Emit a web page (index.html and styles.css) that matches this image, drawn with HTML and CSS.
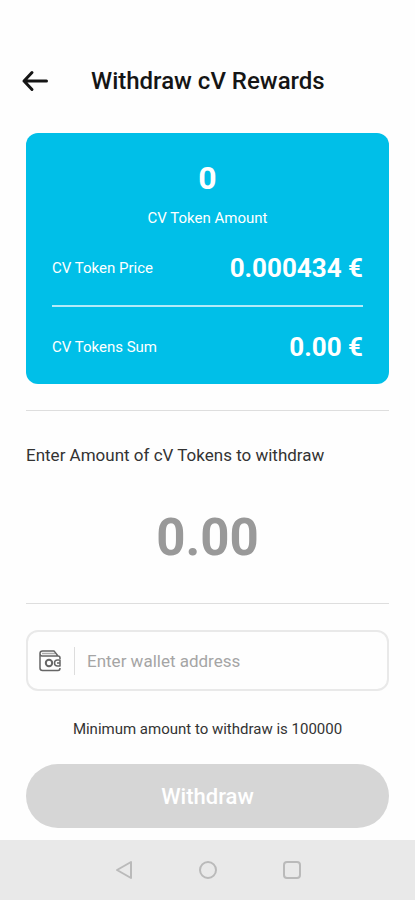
FILE: index.html
```html
<!DOCTYPE html>
<html lang="en">
<head>
<meta charset="utf-8">
<meta name="viewport" content="width=device-width, initial-scale=1">
<title>Withdraw cV Rewards</title>
<link rel="stylesheet" href="styles.css">
</head>
<body>
<header class="header">
  <button class="icon-button" type="button" aria-label="Back">
    <svg width="28" height="24" viewBox="0 0 28 24" fill="none" stroke="#151515" stroke-width="3" stroke-linecap="round" stroke-linejoin="round"><path d="M25.500 11H3M11 2.500L3 11l8 8.500"/></svg>
  </button>
  <h1 class="title">Withdraw cV Rewards</h1>
</header>
<main class="content">
  <section class="card">
    <p class="value value-large">0</p>
    <p class="caption">CV Token Amount</p>
    <div class="row"><span>CV Token Price</span><strong class="value">0.000434 €</strong></div>
    <div class="row row-sum"><span>CV Tokens Sum</span><strong class="value">0.00 €</strong></div>
  </section>
  <form class="form">
    <div class="amount">
      <label class="amount-label" for="amount">Enter Amount of cV Tokens to withdraw</label>
      <input class="amount-input" id="amount" type="text" inputmode="decimal" placeholder="0.00">
    </div>
    <div class="wallet">
      <label class="wallet-label" for="wallet" aria-label="Wallet address">
        <svg width="24" height="24" viewBox="0 0 24 24" fill="none" stroke="#666" stroke-width="1.500" stroke-linejoin="round"><path d="M2 4v15q0 2.500 2.500 2.500H20q2 0 2-2.500M22 10V9q0-2-2-2H4Q2 7 2 4.500T4.500 2H16l4 5"/><path d="M4 4.500h13" stroke="#aaa"/><circle cx="11" cy="14" r="3.200" stroke-width="2"/><path d="M22 11h-2.500q-3 0-3 3t3 3H22zM19 14h3"/></svg>
      </label>
      <input class="wallet-input" id="wallet" type="text" placeholder="Enter wallet address">
    </div>
    <p class="hint">Minimum amount to withdraw is 100000</p>
    <button class="submit" type="button">Withdraw</button>
  </form>
</main>
<nav class="system-nav" aria-label="System">
  <button class="icon-button" type="button" aria-label="Previous"><svg width="20" height="20" viewBox="0 0 20 20" fill="none" stroke="#bababa" stroke-width="2" stroke-linejoin="round"><path d="M17 2v16L3 10z"/></svg></button>
  <button class="icon-button" type="button" aria-label="Home"><svg width="20" height="20" viewBox="0 0 20 20" fill="none" stroke="#bababa" stroke-width="2"><circle cx="10" cy="10" r="8"/></svg></button>
  <button class="icon-button" type="button" aria-label="Recent apps"><svg width="20" height="20" viewBox="0 0 20 20" fill="none" stroke="#bababa" stroke-width="2"><rect x="2" y="2" width="16" height="16" rx="3"/></svg></button>
</nav>
</body>
</html>
```
FILE: styles.css
```css
* {
  box-sizing: border-box;
}

body {
  display: flex;
  flex-direction: column;
  min-height: 100vh;
  margin: 0;
  background: #fefefe;
  color: #333;
  font-family: Roboto, "Liberation Sans", sans-serif;
  font-size: 15px;
  line-height: 20px;
}

h1,
p {
  margin: 0;
}

button,
input {
  margin: 0;
  padding: 0;
  border: 0;
  background: none;
  font: inherit;
}

svg {
  display: block;
}

.header {
  display: flex;
  align-items: center;
  gap: 42px;
  padding: 65px 21px 35px;
}

.title {
  color: #151515;
  font-size: 24px;
  font-weight: 500;
  line-height: 33px;
}

.content {
  flex: 1;
  padding: 0 26px 12px;
}

.card {
  padding: 25px 26px 17px;
  border-radius: 12px;
  background: #00bfe8;
  color: #fff;
  text-align: center;
}

.value {
  font-size: 26px;
  font-weight: 700;
  line-height: 40px;
}

.value-large {
  font-size: 32px;
}

.caption {
  padding: 10px 0;
}

.row {
  display: flex;
  align-items: center;
  justify-content: space-between;
  padding: 10px 0 17px;
}

.row-sum {
  padding: 20px 0 0;
  border-top: 2px solid #b3eaf8;
}

.amount {
  margin: 26px 0;
  padding: 34px 0 36px;
  border: solid #dedede;
  border-width: 1px 0;
}

.amount-label {
  display: block;
  font-size: 17px;
}

.amount-input {
  display: block;
  width: 100%;
  height: 60px;
  margin-top: 42px;
  color: #333;
  font-size: 51px;
  font-weight: 700;
  text-align: center;
}

.amount-input::placeholder {
  color: #999;
}

.wallet {
  display: flex;
  align-items: center;
  height: 61px;
  border: 2px solid #e9e9e9;
  border-radius: 12px;
}

.wallet-label {
  padding: 2px 12px 2px 10px;
  border-right: 1px solid #ddd;
}

.wallet-input {
  flex: 1;
  min-width: 0;
  height: 100%;
  padding: 0 12px;
  font-size: 17px;
}

.wallet-input::placeholder {
  color: #a5a5a5;
}

.hint {
  padding: 28px 0 25px;
  text-align: center;
}

.submit {
  display: block;
  width: 100%;
  height: 64px;
  padding-top: 2px;
  border-radius: 32px;
  background: #d6d6d6;
  color: #fff;
  font-size: 22px;
  font-weight: 500;
}

.system-nav {
  display: flex;
  align-items: center;
  justify-content: center;
  gap: 64px;
  height: 60px;
  background: #e9e9e9;
}
```
